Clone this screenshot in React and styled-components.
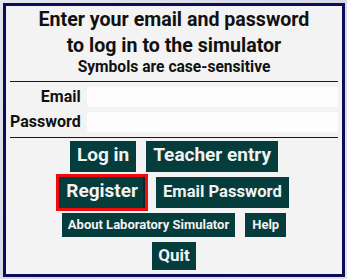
import React from 'react';
import styled, { createGlobalStyle } from 'styled-components';

const GlobalStyle = createGlobalStyle`
  html, body {
    margin: 0;
    padding: 0;
    background: linear-gradient(135deg, #e4e6ee 0%, #d6d9e4 50%, #e2e4ec 100%);
    font-family: Roboto, "Liberation Sans", sans-serif;
  }
`;

const Page = styled.div`
  width: 347px;
  height: 279px;
  padding: 3px;
  box-sizing: border-box;
`;

const Frame = styled.div`
  width: 342px;
  height: 274px;
  box-sizing: border-box;
  border: 3px solid #0c0c58;
  background: #f3f3f3;
  padding: 1px 4px 0 4px;
  display: flex;
  flex-direction: column;
`;

const Title = styled.h1`
  margin: 0;
  font-size: 19.6px;
  line-height: 26px;
  font-weight: 700;
  text-align: center;
  color: #111;
`;

const Subtitle = styled.div`
  font-size: 15.6px;
  line-height: 17px;
  font-weight: 700;
  text-align: center;
  color: #111;
`;

const Rule = styled.hr`
  margin: ${(p) => p.$top || 0}px 0 0 0;
  border: 0;
  height: 1px;
  background: #10105a;
`;

const Form = styled.div`
  display: grid;
  grid-template-columns: auto 1fr;
  column-gap: 6px;
  row-gap: 5px;
  margin: 5px 0 5px 0;
`;

const Label = styled.label`
  font-size: 16px;
  line-height: 20px;
  font-weight: 700;
  text-align: right;
  color: #111;
`;

const Input = styled.input`
  height: 20px;
  box-sizing: border-box;
  border: 0;
  border-radius: 3px;
  background: #fdfdfd;
  outline: none;
  padding: 0 4px;
  font: inherit;
`;

const Buttons = styled.div`
  display: flex;
  flex-direction: column;
  align-items: center;
  gap: 5px;
  margin-top: 3px;
`;

const Row = styled.div`
  display: flex;
  justify-content: center;
  gap: ${(p) => p.$gap || 10}px;
`;

const Button = styled.button`
  border: 0;
  margin: 0;
  background: #053c3c;
  color: #f2f2f2;
  font-family: Roboto, "Liberation Sans", sans-serif;
  font-weight: 700;
  font-size: ${(p) => p.$size}px;
  height: ${(p) => p.$height}px;
  line-height: ${(p) => p.$line}px;
  padding: 0 ${(p) => p.$pad || 7}px ${(p) => p.$height - p.$line}px;
  white-space: nowrap;
  cursor: pointer;
  outline: ${(p) => (p.$focused ? '3px solid #ee0c0c' : 'none')};
  box-shadow: ${(p) => (p.$focused ? 'inset -2px 0 0 #022a2a' : 'none')};
`;

export default function App() {
  return (
    <>
      <GlobalStyle />
      <Page>
        <Frame>
          <Title>
            Enter your email and password
            <br />
            to log in to the simulator
          </Title>
          <Subtitle>Symbols are case-sensitive</Subtitle>
          <Rule $top={5} />
          <Form>
            <Label htmlFor="email">Email</Label>
            <Input id="email" type="text" />
            <Label htmlFor="password">Password</Label>
            <Input id="password" type="password" />
          </Form>
          <Rule />
          <Buttons>
            <Row>
              <Button $size={19} $height={31} $line={28}>Log in</Button>
              <Button $size={19} $height={31} $line={28}>Teacher entry</Button>
            </Row>
            <Row $gap={11}>
              <Button $size={19} $height={31} $line={28} $focused>Register</Button>
              <Button $size={16.6} $height={31} $line={29}>Email Password</Button>
            </Row>
            <Row>
              <Button $size={13} $height={24} $line={24} $pad={6}>About Laboratory Simulator</Button>
              <Button $size={13} $height={24} $line={24}>Help</Button>
            </Row>
            <Row>
              <Button $size={17} $height={28} $line={26} $pad={6}>Quit</Button>
            </Row>
          </Buttons>
        </Frame>
      </Page>
    </>
  );
}
